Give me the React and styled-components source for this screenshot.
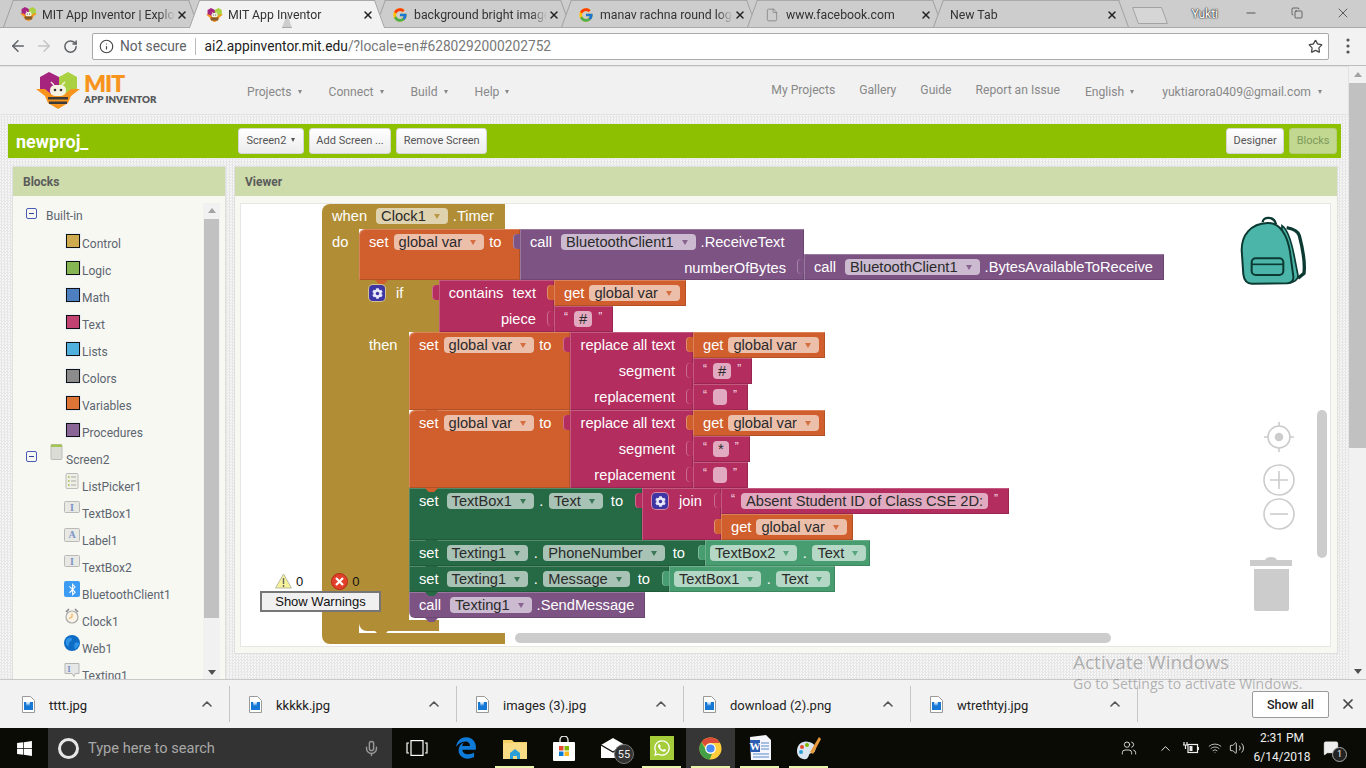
import React from 'react'
import styled, { createGlobalStyle } from 'styled-components'
import { ArrowLeft, ArrowRight, RotateCw, Info, Star, X, ChevronUp, Minus, Copy, File, Mic, Volume2, Wifi, Users, MessageSquare } from 'lucide-react'
import { FaWindows, FaWhatsapp, FaEdgeLegacy, FaCog, FaBluetoothB } from 'react-icons/fa'
import { FcGoogle } from 'react-icons/fc'

const GOLD = '#b18e35'
const ORANGE = '#d05f2d'
const MAGENTA = '#b32d5e'
const PURPLE = '#7d5384'
const DARK = '#266a45'
const LIGHT = '#479c70'

const GlobalStyle = createGlobalStyle`
  html, body {
    margin: 0;
    padding: 0;
    overflow: hidden;
    font-family: Roboto, "Liberation Sans", sans-serif;
  }
`

const Shell = styled.div`
  width: 1366px;
  height: 768px;
  display: flex;
  flex-direction: column;
  overflow: hidden;
  position: relative;
`

/* browser chrome */
const TabStrip = styled.div`
  height: 28px;
  flex: none;
  display: flex;
  background: #cdcdcd;
  padding-left: 8px;
  box-sizing: border-box;
  border-bottom: 1px solid #a9a9a9;
`

const Tab = styled.div`
  position: relative;
  isolation: isolate;
  width: 186px;
  height: ${p => (p.$active ? '28px' : '27px')};
  flex: none;
  display: flex;
  align-items: center;
  padding: 2px 5px 0 12px;
  box-sizing: border-box;
  font-size: 12.3px;
  color: #333;
  z-index: ${p => (p.$active ? 2 : 1)};
  &::before,
  &::after {
    content: '';
    position: absolute;
    top: 0;
    bottom: 0;
    width: 50%;
    z-index: -1;
    background: ${p => (p.$active ? '#f2f2f2' : '#cdcdcd')};
    border-top: 1px solid #a9a9a9;
    box-sizing: border-box;
  }
  &::before {
    left: 0;
    border-left: 1px solid #a0a0a0;
    transform: skewX(-20deg);
  }
  &::after {
    right: 0;
    border-right: 1px solid #a0a0a0;
    transform: skewX(20deg);
  }
`

const Favicon = styled.span`
  width: 16px;
  height: 16px;
  flex: none;
  margin-right: 6px;
  display: flex;
  align-items: center;
  justify-content: center;
  color: #777;
`

const TabTitle = styled.span`
  flex: 1;
  white-space: nowrap;
  overflow: hidden;
  mask-image: linear-gradient(to right, #000 88%, transparent);
`

const TabClose = styled.span`
  width: 14px;
  flex: none;
  display: flex;
  justify-content: center;
  color: #222;
`

const NewTab = styled.div`
  width: 28px;
  height: 15px;
  flex: none;
  margin: 7px 0 0 11px;
  transform: skewX(20deg);
  background: #d6d6d6;
  border: 1px solid #a3a3a3;
  border-radius: 1px;
`

const ProfileName = styled.span`
  margin-left: auto;
  margin-right: 10px;
  align-self: flex-start;
  margin-top: 7px;
  font-size: 12px;
  color: #fff;
  text-shadow: 0 0 2px #333, 0 0 1px #333, 0 0 1px #333;
`

const WindowButton = styled.div`
  width: 46px;
  flex: none;
  height: 26px;
  display: flex;
  align-items: center;
  justify-content: center;
  color: #222;
`

const Toolbar = styled.div`
  height: 38px;
  flex: none;
  display: flex;
  align-items: center;
  background: #f2f2f2;
  box-sizing: border-box;
  border-bottom: 1px solid #bdbdbd;
  padding-bottom: 1px;
`

const NavIcon = styled.span`
  width: ${p => p.$w}px;
  flex: none;
  display: flex;
  justify-content: center;
  color: ${p => p.$color || '#5f6368'};
`

const Omnibox = styled.div`
  width: 1237px;
  height: 27px;
  flex: none;
  margin-left: 4px;
  display: flex;
  align-items: center;
  box-sizing: border-box;
  padding: 0 5px 0 6px;
  background: #fff;
  border: 1px solid #a9a9a9;
  border-radius: 2px;
  font-size: 13.75px;
  color: #5f6368;
`

const NotSecure = styled.span`
  margin-left: 6px;
`

const Divider = styled.span`
  width: 1px;
  height: 17px;
  background: #bbb;
  margin: 0 9px 0 8px;
`

const UrlHost = styled.span`
  color: #222;
`

const UrlRest = styled.span`
  color: #777;
  flex: 1;
`

/* page */
const Page = styled.div`
  height: 613px;
  flex: none;
  display: flex;
  background-color: #f5f5f5;
  background-image: repeating-conic-gradient(#e6e6e6 0 25%, #f6f6f6 0 50%);
  background-size: 3px 3px;
  overflow: hidden;
`

const PageMain = styled.div`
  width: 1349px;
  flex: none;
`

const PageScroll = styled.div`
  width: 17px;
  flex: none;
  position: relative;
  background: #f1f1f1;
  display: flex;
  flex-direction: column;
  align-items: stretch;
`

const ScrollArrow = styled.span`
  width: 0;
  height: 0;
  align-self: center;
  margin: ${p => p.$margin};
  border-left: 4px solid transparent;
  border-right: 4px solid transparent;
  ${p => (p.$up ? 'border-bottom: 5px solid #a3a3a3;' : 'border-top: 5px solid #505050;')}
`

const PageThumb = styled.div`
  height: 365px;
  background: #c1c1c1;
`

const Header = styled.header`
  height: 49px;
  display: flex;
  align-items: center;
  background: #f1f1f1;
  border: 1px solid #e2e2e2;
  border-left: 0;
  box-sizing: border-box;
  padding-top: 2px;
  color: #888;
  font-size: 12.15px;
`

const Brand = styled.div`
  margin: -2px 0 0 36px;
  width: 211px;
  flex: none;
  display: flex;
  align-items: center;
  gap: 4px;
`

const BrandText = styled.div`
  display: flex;
  flex-direction: column;
  margin-top: -2px;
  font-family: Lato, "Liberation Sans", sans-serif;
  font-weight: 800;
`

const BrandBig = styled.span`
  font-size: 23px;
  line-height: 19px;
  height: 19px;
  color: #f7941e;
  letter-spacing: -1px;
`

const BrandSmall = styled.span`
  font-size: 9.8px;
  line-height: 12px;
  color: #58595b;
`

const NavItem = styled.span`
  white-space: nowrap;
  margin-right: ${p => p.$gap || 0}px;
  display: flex;
  align-items: center;
  gap: ${p => p.$caretGap || 6}px;
  margin-top: ${p => (p.$up ? '-3px' : '0')};
`

const MiniCaret = styled.i`
  width: 0;
  height: 0;
  border-left: 2.5px solid transparent;
  border-right: 2.5px solid transparent;
  border-top: 4px solid ${p => p.$color || '#888'};
`

const NavSpacer = styled.span`
  flex: 1;
`

const ProjectBar = styled.div`
  height: 34px;
  margin: 9px 8px 9px 8px;
  display: flex;
  align-items: center;
  padding: 0 4px 0 8px;
  background: #8cc000;
`

const ProjectName = styled.span`
  width: 222px;
  flex: none;
  font-size: 18px;
  font-weight: 700;
  color: #fff;
`

const BarButton = styled.button`
  height: 26px;
  padding: 0 ${p => p.$pad || 6.5}px 2px;
  margin-right: 5px;
  display: flex;
  align-items: center;
  gap: 5px;
  font: 11px Roboto, "Liberation Sans", sans-serif;
  color: ${p => (p.$selected ? '#7d9a5a' : '#555')};
  background: ${p => (p.$selected ? '#c2d790' : 'linear-gradient(#ffffff, #ececec)')};
  border: 1px solid ${p => (p.$selected ? '#b4cb80' : '#d5d5d5')};
  border-radius: 3px;
  white-space: nowrap;
  &:last-child {
    margin-right: 0;
  }
`

const Panels = styled.div`
  display: flex;
  gap: 10px;
  padding-left: 13px;
  align-items: flex-start;
`

const Panel = styled.section`
  width: ${p => p.$w}px;
  flex: none;
  background: #f7f8f2;
  box-shadow: 0 0 0 1px #dfdfdf;
`

const PanelHead = styled.div`
  height: 29px;
  display: flex;
  align-items: center;
  padding-left: 10px;
  background: #cddcaa;
  font-size: 12px;
  font-weight: 700;
  color: #5b5b5b;
`

/* blocks tree */
const TreeBody = styled.div`
  height: 490px;
  display: flex;
  overflow: hidden;
  padding-top: 7px;
  box-sizing: border-box;
`

const TreeList = styled.div`
  width: 190px;
  flex: none;
  height: 500px;
`

const TreeRow = styled.div`
  height: ${p => p.$h || 27}px;
  display: flex;
  align-items: flex-start;
  padding-left: ${p => p.$indent}px;
  font-size: 12px;
  color: #5d6570;
`

const TreeLabel = styled.span`
  margin-top: ${p => p.$top ?? 9}px;
  margin-left: ${p => p.$left ?? 3}px;
  white-space: nowrap;
`

const Expander = styled.span`
  width: 9px;
  height: 9px;
  flex: none;
  margin: ${p => p.$top ?? 5}px ${p => p.$after}px 0 0;
  border: 1px solid #4a5bb8;
  border-radius: 2px;
  display: flex;
  align-items: center;
  justify-content: center;
  &::after {
    content: '';
    width: 5px;
    height: 1px;
    background: #33439f;
  }
`

const Swatch = styled.span`
  width: 12px;
  height: 12px;
  flex: none;
  margin-top: 6px;
  background: ${p => p.$color};
  border: 1px solid #111;
  box-shadow: 0 0 0 1px #e8eef7;
`

const TreeScroll = styled.div`
  width: 15px;
  flex: none;
  background: #f1f1f1;
  display: flex;
  flex-direction: column;
  align-items: stretch;
  padding: 0 1px;
`

const TreeThumb = styled.div`
  height: 399px;
  background: #c1c1c1;
  margin-top: 6px;
`

const TreeGlyph = styled.svg`
  width: ${p => p.$w || 16}px;
  height: 16px;
  flex: none;
  margin-top: ${p => p.$top ?? 2}px;
`

const BluetoothTile = styled.span`
  width: 16px;
  height: 16px;
  flex: none;
  margin-top: 2px;
  display: flex;
  align-items: center;
  justify-content: center;
  background: #3c9bf2;
  color: #fff;
  border-radius: 2px;
`

/* viewer canvas */
const ViewerBody = styled.div`
  padding: 8px 7px 7px 6px;
`

const Canvas = styled.div`
  position: relative;
  height: 442px;
  background: #fff;
  box-shadow: 0 0 0 1px #e6e6e6;
  overflow: hidden;
`

const Block = styled.div`
  position: absolute;
  left: ${p => p.$x - 241}px;
  top: ${p => p.$y - 204}px;
  width: ${p => p.$w}px;
  height: ${p => p.$h}px;
  background: ${p => p.$c};
  box-shadow: ${p => (p.$flat ? 'none' : 'inset 1px 1px rgba(255,255,255,.22), inset -1px -1px rgba(0,0,0,.14)')};
  border-radius: ${p => p.$r || '0'};
  font: 14.67px "Liberation Sans", Arial, sans-serif;
  color: #fff;
  ${p => p.$tab && `
    &::before {
      content: '';
      position: absolute;
      left: -7px;
      top: 5px;
      width: 7px;
      height: 15px;
      background: ${p.$c};
      border-radius: 4px 0 0 4px;
      box-shadow: inset 1px 0 rgba(255,255,255,.3);
    }
  `}
`

const Row = styled.div`
  height: ${p => p.$h || 26}px;
  display: flex;
  align-items: center;
  justify-content: ${p => (p.$right ? 'flex-end' : 'flex-start')};
  padding: ${p => (p.$right ? '0 18px 0 0' : `0 0 0 ${p.$pad || 10}px`)};
  gap: ${p => p.$gap || 5}px;
  white-space: nowrap;
`

const Field = styled.span`
  height: 16px;
  line-height: 16px;
  min-width: 14px;
  padding: 0 ${p => (p.$text ? 5 : 8)}px 0 5px;
  margin-left: ${p => p.$ml || 0}px;
  display: inline-flex;
  align-items: center;
  flex: none;
  border-radius: 4px;
  box-sizing: border-box;
  background: ${p => p.$tint};
  color: #2a2a2a;
`

const FieldCaret = styled.i`
  margin-left: 8px;
  width: 0;
  height: 0;
  border-left: 3px solid transparent;
  border-right: 3px solid transparent;
  border-top: 5px solid ${p => p.$c};
  opacity: 0.85;
`

const Dot = styled.span`
  margin: 0 -2.5px;
`

const Quote = styled.span`
  font-size: 12px;
  line-height: 16px;
  color: #f4dbe5;
  margin-top: -5px;
`

const Notch = styled.span`
  position: absolute;
  left: 16px;
  bottom: -4px;
  width: 13px;
  height: 4px;
  z-index: 2;
  background: ${p => p.$c};
  clip-path: polygon(0 0, 100% 0, 70% 100%, 30% 100%);
`

const Mutator = styled.span`
  width: 16px;
  height: 16px;
  flex: none;
  margin-right: 6px;
  display: flex;
  align-items: center;
  justify-content: center;
  background: #3f36a6;
  border-radius: 4px;
  box-shadow: 0 0 0 1px rgba(255,255,255,.45);
  color: #e8e8f8;
`

const CanvasArt = styled.svg`
  position: absolute;
  left: ${p => p.$x - 241}px;
  top: ${p => p.$y - 204}px;
`

const CanvasScroll = styled.div`
  position: absolute;
  left: ${p => p.$x - 241}px;
  top: ${p => p.$y - 204}px;
  width: ${p => p.$w}px;
  height: ${p => p.$h}px;
  border-radius: 5px;
  background: #ccc;
`

const WarningWidget = styled.div`
  position: absolute;
  left: 19px;
  top: 367px;
  width: 121px;
  z-index: 3;
  display: flex;
  flex-direction: column;
  font: 13px "Liberation Sans", Arial, sans-serif;
  color: #111;
`

const WarningCounts = styled.div`
  height: 20px;
  display: flex;
  align-items: center;
  padding-left: 15px;
  gap: 4px;
`

const ErrorCount = styled.span`
  display: flex;
  align-items: center;
  gap: 4px;
  margin-left: 24px;
`

const WarningButton = styled.div`
  height: 21px;
  box-sizing: border-box;
  border: 2px solid #767676;
  background: #f0f0f0;
  display: flex;
  align-items: center;
  justify-content: center;
`

/* download shelf */
const Downloads = styled.div`
  height: 49px;
  flex: none;
  display: flex;
  align-items: center;
  background: #f2f2f2;
  border-top: 1px solid #c8c8c8;
  box-sizing: border-box;
  padding-left: 3px;
  font-size: 13px;
  color: #222;
`

const DownloadItem = styled.div`
  width: 227px;
  height: 36px;
  flex: none;
  box-sizing: border-box;
  display: flex;
  align-items: center;
  padding-left: 19px;
  border-right: 1px solid #c6c6c6;
`

const DocGlyph = styled.svg`
  flex: none;
`

const DownloadName = styled.span`
  margin-left: 14px;
  flex: 1;
  margin-top: 3px;
`

const DownloadCaret = styled.span`
  width: 44px;
  flex: none;
  display: flex;
  justify-content: center;
  color: #555;
`

const ShowAll = styled.div`
  margin-left: auto;
  width: 77px;
  height: 27px;
  box-sizing: border-box;
  display: flex;
  align-items: center;
  justify-content: center;
  background: #fff;
  border: 1px solid #9a9a9a;
  border-radius: 2px;
  font-size: 12.5px;
  font-weight: 500;
  color: #222;
`

const ShelfClose = styled.span`
  width: 37px;
  flex: none;
  display: flex;
  justify-content: center;
  color: #444;
`

const Watermark = styled.div`
  position: absolute;
  left: 1073px;
  top: 650px;
  pointer-events: none;
  font-family: "Open Sans", "Liberation Sans", sans-serif;
  color: rgba(120, 120, 120, 0.55);
  font-size: 14px;
  z-index: 5;
  white-space: nowrap;
`

const WatermarkBig = styled.div`
  font-size: 19px;
  line-height: 24px;
`

/* taskbar */
const Taskbar = styled.div`
  height: 40px;
  flex: none;
  display: flex;
  align-items: stretch;
  background: #0b0b05;
  color: #fff;
`

const StartButton = styled.div`
  width: 48px;
  flex: none;
  display: flex;
  align-items: center;
  justify-content: center;
`

const SearchBox = styled.div`
  width: 344px;
  flex: none;
  display: flex;
  align-items: center;
  background: #333;
  font-size: 14.6px;
  color: #a8a8a8;
`

const Cortana = styled.span`
  width: 15px;
  height: 15px;
  margin: 0 9px 0 10px;
  flex: none;
  border: 3px solid #e6e6e6;
  border-radius: 50%;
`

const SearchText = styled.span`
  flex: 1;
`

const SearchMic = styled.span`
  width: 42px;
  display: flex;
  justify-content: center;
  color: #999;
`

const TaskSlot = styled.div`
  position: relative;
  width: 49px;
  flex: none;
  display: flex;
  align-items: center;
  justify-content: center;
  background: ${p => (p.$focus ? '#363636' : 'transparent')};
  ${p => p.$open && `
    &::after {
      content: '';
      position: absolute;
      left: 5px;
      right: 5px;
      bottom: 0;
      height: 2px;
      background: #e9f3ac;
    }
  `}
`

const MailBadge = styled.span`
  position: absolute;
  left: 26px;
  top: 16px;
  width: 20px;
  height: 20px;
  border-radius: 50%;
  background: #333;
  border: 1px solid #777;
  box-sizing: border-box;
  display: flex;
  align-items: center;
  justify-content: center;
  font-size: 11px;
  color: #eee;
`

const WhatsappTile = styled.span`
  width: 24px;
  height: 24px;
  display: flex;
  align-items: center;
  justify-content: center;
  background: #a4cd39;
`

const Tray = styled.div`
  margin-left: auto;
  padding-right: 20px;
  display: flex;
  align-items: center;
`

const TrayItem = styled.span`
  position: relative;
  width: ${p => p.$w}px;
  flex: none;
  display: flex;
  justify-content: center;
  color: #eee;
`

const TrayClock = styled.div`
  width: 68px;
  flex: none;
  text-align: center;
  font-size: 12px;
  line-height: 19px;
  color: #eee;
`

const NotifyBadge = styled.span`
  position: absolute;
  left: 16px;
  top: 7px;
  width: 13px;
  height: 13px;
  border-radius: 50%;
  border: 1px solid #aaa;
  background: #222;
  font-size: 9px;
  line-height: 13px;
  text-align: center;
  color: #eee;
`

const BeeSvg = styled.svg`
  flex: none;
`

function BeeLogo({ size = 44 }) {
  return (
    <BeeSvg width={size} height={size * 37 / 44} viewBox="0 0 44 37">
      <polygon points="13,0 23,5 23,19 13,24 4,19 4,5" fill="#a6247e" />
      <polygon points="32,0 41,5 41,19 32,24 23,19 23,5" fill="#a9d141" />
      <polygon points="0,17 9,17 15,22 29,22 35,17 44,17 35,24 32,31 22,37 12,31 9,24" fill="#f7941e" />
      <rect x="14" y="13" width="16" height="11" rx="5" fill="#f7f3e3" />
      <circle cx="19" cy="18" r="1.3" fill="#333" />
      <circle cx="25" cy="18" r="1.3" fill="#333" />
      <path d="M15 10l3 3M29 10l-3 3" stroke="#f7f3e3" strokeWidth="1.4" />
      <rect x="12" y="25" width="20" height="2.5" fill="#3a3a3a" />
      <rect x="13" y="29.5" width="18" height="2.5" fill="#3a3a3a" />
    </BeeSvg>
  )
}

function Backpack() {
  return (
    <CanvasArt $x={1230} $y={205} width="90" height="90" viewBox="0 0 270 270">
      <path d="M98 52C98 34 132 32 138 58" fill="none" stroke="#0c3a32" strokeWidth="7" />
      <path d="M170 68C192 72 204 78 208 92C218 130 226 170 222 205L204 220" fill="#fff" stroke="#0c3a32" strokeWidth="10" />
      <path d="M156 62C176 76 186 120 192 150L204 212C204 222 196 228 186 232L150 234Z" fill="#4bb5a9" stroke="#0c3a32" strokeWidth="5" />
      <path d="M35 135C35 90 62 56 112 54C150 52 172 90 180 140L190 214C192 226 184 234 172 235L66 236C50 236 42 224 40 208Z" fill="#4bb5a9" stroke="#0c3a32" strokeWidth="6" strokeLinejoin="round" />
      <rect x="65" y="160" width="95" height="50" rx="12" fill="#4bb5a9" stroke="#0c3a32" strokeWidth="6" />
      <path d="M66 178H160" stroke="#0c3a32" strokeWidth="5" />
    </CanvasArt>
  )
}

function ZoomControls() {
  return (
    <CanvasArt $x={1245} $y={420} width="50" height="195" viewBox="0 0 50 195" fill="none" stroke="#ccc" strokeWidth="1.6">
      <circle cx="34" cy="17" r="11" />
      <circle cx="34" cy="17" r="3.5" fill="#ccc" />
      <path d="M34 2v4M34 28v4M19 17h4M45 17h4" />
      <circle cx="34" cy="60" r="15" />
      <path d="M25 60h18M34 51v18" />
      <circle cx="34" cy="94" r="15" />
      <path d="M25 94h18" />
      <path d="M5 146h42v-6H32c-1-4-11-4-12 0H5z" fill="#ccc" stroke="none" />
      <path d="M9 149h35v40c0 1-1 2-2 2H11c-1 0-2-1-2-2z" fill="#ccc" stroke="none" />
    </CanvasArt>
  )
}

function Drop({ tint, c, ml, children }) {
  return (
    <Field $tint={tint} $ml={ml}>
      {children}
      <FieldCaret $c={c} />
    </Field>
  )
}

const goldTint = '#dfd2ae'
const orangeTint = '#ecbfab'
const purpleTint = '#cbbad0'
const darkTint = '#a8c3b5'
const lightTint = '#b5d7c5'
const pink = '#e1aac0'

function GetVar({ x, y }) {
  return (
    <Block $x={x} $y={y} $w={132} $h={26} $c={ORANGE} $tab>
      <Row>
        <span>get</span>
        <Drop tint={orangeTint} c={ORANGE}>global var</Drop>
      </Row>
    </Block>
  )
}

function Str({ x, y, w, text }) {
  return (
    <Block $x={x} $y={y} $w={w} $h={26} $c={MAGENTA} $tab>
      <Row $gap={6}>
        <Quote>“</Quote>
        <Field $tint={pink} $text>{text}</Field>
        <Quote>”</Quote>
      </Row>
    </Block>
  )
}

function SetVar({ x, y, h }) {
  return (
    <Block $x={x} $y={y} $w={161} $h={h} $c={ORANGE} $r="6px 0 0 0">
      <Row>
        <span>set</span>
        <Drop tint={orangeTint} c={ORANGE}>global var</Drop>
        <span>to</span>
      </Row>
      <Notch $c={ORANGE} />
    </Block>
  )
}

function ReplaceGroup({ y, star }) {
  return (
    <>
      <SetVar x={409} y={y} h={78} />
      <Block $x={570} $y={y} $w={123} $h={78} $c={MAGENTA} $tab>
        <Row $right>replace all text</Row>
        <Row $right>segment</Row>
        <Row $right>replacement</Row>
      </Block>
      <GetVar x={693} y={y} />
      <Str x={693} y={y + 26} w={star ? 57 : 59} text={star ? '*' : '#'} />
      <Str x={693} y={y + 52} w={55} text="" />
    </>
  )
}

function SetProperty({ y, w, h = 26, component, property }) {
  return (
    <Block $x={409} $y={y} $w={w} $h={h} $c={DARK}>
      <Row $gap={8}>
        <span>set</span>
        <Drop tint={darkTint} c={DARK}>{component}</Drop>
        <Dot>.</Dot>
        <Drop tint={darkTint} c={DARK}>{property}</Drop>
        <span>to</span>
      </Row>
      <Notch $c={DARK} />
    </Block>
  )
}

function GetProperty({ x, y, w, component }) {
  return (
    <Block $x={x} $y={y} $w={w} $h={26} $c={LIGHT} $tab>
      <Row $gap={8} $pad={5}>
        <Drop tint={lightTint} c={LIGHT}>{component}</Drop>
        <Dot>.</Dot>
        <Drop tint={lightTint} c={LIGHT}>Text</Drop>
      </Row>
    </Block>
  )
}

function BlocksWorkspace() {
  return (
    <>
      <Block $x={322} $y={204} $w={183} $h={25} $c={GOLD} $r="8px 0 0 0" $flat>
        <Row $h={24}>
          <span>when</span>
          <Drop tint={goldTint} c={GOLD} ml={4}>Clock1</Drop>
          <span>.Timer</span>
        </Row>
      </Block>
      <Block $x={322} $y={229} $w={37} $h={404} $c={GOLD} $flat>
        <Row $h={25}>do</Row>
      </Block>
      <Block $x={322} $y={633} $w={183} $h={11} $c={GOLD} $r="0 0 0 8px" $flat />

      <SetVar x={359} y={229} h={51} />
      <Block $x={520} $y={229} $w={284} $h={51} $c={PURPLE} $tab>
        <Row>
          <span>call</span>
          <Field $tint={purpleTint} $ml={4}>
            BluetoothClient1
            <FieldCaret $c={PURPLE} />
          </Field>
          <span>.ReceiveText</span>
        </Row>
        <Row $right>numberOfBytes</Row>
      </Block>
      <Block $x={804} $y={254} $w={360} $h={26} $c={PURPLE} $tab>
        <Row>
          <span>call</span>
          <Field $tint={purpleTint} $ml={4}>
            BluetoothClient1
            <FieldCaret $c={PURPLE} />
          </Field>
          <span>.BytesAvailableToReceive</span>
        </Row>
      </Block>

      <Block $x={359} $y={280} $w={80} $h={52} $c={GOLD} $flat>
        <Row>
          <Mutator><FaCog size={11} /></Mutator>
          <span>if</span>
        </Row>
      </Block>
      <Block $x={359} $y={332} $w={50} $h={288} $c={GOLD} $flat>
        <Row $h={25}>then</Row>
      </Block>
      <Block $x={359} $y={620} $w={80} $h={11} $c={GOLD} $r="0 0 0 8px" $flat>
        <Notch $c={GOLD} />
      </Block>

      <Block $x={439} $y={280} $w={115} $h={52} $c={MAGENTA} $tab>
        <Row $right $gap={9}>
          <span>contains</span>
          <span>text</span>
        </Row>
        <Row $right>piece</Row>
      </Block>
      <GetVar x={554} y={280} />
      <Str x={554} y={306} w={59} text="#" />

      <ReplaceGroup y={332} />
      <ReplaceGroup y={410} star />

      <SetProperty y={488} w={233} h={52} component="TextBox1" property="Text" />
      <Block $x={642} $y={488} $w={79} $h={52} $c={MAGENTA} $tab>
        <Row>
          <Mutator><FaCog size={11} /></Mutator>
          <span>join</span>
        </Row>
      </Block>
      <Str x={721} y={488} w={288} text="Absent Student ID of Class CSE 2D:" />
      <GetVar x={721} y={514} />

      <SetProperty y={540} w={296} component="Texting1" property="PhoneNumber" />
      <GetProperty x={705} y={540} w={165} component="TextBox2" />
      <SetProperty y={566} w={260} component="Texting1" property="Message" />
      <GetProperty x={669} y={566} w={166} component="TextBox1" />
      <Block $x={409} $y={592} $w={236} $h={26} $c={PURPLE} $r="0 0 0 6px">
        <Row>
          <span>call</span>
          <Field $tint={purpleTint} $ml={4}>
            Texting1
            <FieldCaret $c={PURPLE} />
          </Field>
          <span>.SendMessage</span>
        </Row>
        <Notch $c={PURPLE} />
      </Block>
    </>
  )
}

const treeColors = [
  ['Control', '#cdab4e'],
  ['Logic', '#86b553'],
  ['Math', '#4d7fc1'],
  ['Text', '#c24371'],
  ['Lists', '#4fb0dd'],
  ['Colors', '#8c8c8c'],
  ['Variables', '#dd7536'],
  ['Procedures', '#8a6597'],
]

function PhoneGlyph() {
  return (
    <TreeGlyph viewBox="0 0 13 16" $w={13} $top={0}>
      <rect x="1" y="0.5" width="11" height="15" rx="1" fill="#dcdcd6" stroke="#bbb" />
      <rect x="1" y="0.5" width="11" height="2.5" fill="#a5c552" />
    </TreeGlyph>
  )
}

function TextGlyph({ letter }) {
  return (
    <TreeGlyph viewBox="0 0 16 16">
      <rect x="0.5" y="1.5" width="15" height={letter === 'A' ? 13 : 11} rx="1" fill="#e9e9e4" stroke="#b9b9b9" />
      <text x="8" y="11" textAnchor="middle" fontSize="10" fontWeight="700" fontFamily="Liberation Serif, serif" fill="#7d93c9">{letter}</text>
    </TreeGlyph>
  )
}

function ListGlyph() {
  return (
    <TreeGlyph viewBox="0 0 16 16">
      <rect x="2" y="0.5" width="12" height="15" rx="1" fill="#efefe6" stroke="#bbb" />
      <path d="M4 4h1.5M4 8h1.5M4 12h1.5" stroke="#9cbc3e" strokeWidth="1.6" />
      <path d="M7 4h5M7 8h5M7 12h5" stroke="#aaa" strokeWidth="1" />
    </TreeGlyph>
  )
}

function ClockGlyph() {
  return (
    <TreeGlyph viewBox="0 0 16 16">
      <path d="M2 4l3-3M14 4l-3-3" stroke="#888" strokeWidth="1.6" />
      <circle cx="8" cy="9" r="6" fill="#fbf4e6" stroke="#a9a9a9" strokeWidth="1.2" />
      <path d="M8 5.5V9l-3 1.5" stroke="#f2a94e" strokeWidth="1.2" fill="none" />
    </TreeGlyph>
  )
}

function GlobeGlyph() {
  return (
    <TreeGlyph viewBox="0 0 16 16">
      <circle cx="8" cy="8" r="8" fill="#0f6cc4" />
      <path d="M2 5c3-3 5-3 6-1 0 3-4 2-3 6 0 2-2 1-3-1zM11 8c2-1 3 0 4 0 0 3-2 5-4 6-1-2-1-4 0-6z" fill="#2f94e5" />
    </TreeGlyph>
  )
}

function BubbleGlyph() {
  return (
    <TreeGlyph viewBox="0 0 16 16">
      <path d="M1 1.5h14v10h-4l-1 3-2-3H1z" fill="#e6e8e8" stroke="#b5b5b5" />
      <text x="5" y="10" textAnchor="middle" fontSize="9" fontWeight="700" fontFamily="Liberation Serif, serif" fill="#7d93c9">I</text>
    </TreeGlyph>
  )
}

const treeComponents = [
  ['ListPicker1', <ListGlyph />],
  ['TextBox1', <TextGlyph letter="I" />],
  ['Label1', <TextGlyph letter="A" />],
  ['TextBox2', <TextGlyph letter="I" />],
  ['BluetoothClient1', <BluetoothTile><FaBluetoothB size={13} /></BluetoothTile>],
  ['Clock1', <ClockGlyph />],
  ['Web1', <GlobeGlyph />],
  ['Texting1', <BubbleGlyph />],
]

function BlocksTree() {
  return (
    <TreeBody>
      <TreeList>
        <TreeRow $indent={13} $h={25}>
          <Expander $after={9} />
          <TreeLabel $top={6} $left={0}>Built-in</TreeLabel>
        </TreeRow>
        {treeColors.map(([name, color]) => (
          <TreeRow key={name} $indent={53}>
            <Swatch $color={color} />
            <TreeLabel $left={2}>{name}</TreeLabel>
          </TreeRow>
        ))}
        <TreeRow $indent={13}>
          <Expander $after={13} $top={7} />
          <PhoneGlyph />
          <TreeLabel $left={3}>Screen2</TreeLabel>
        </TreeRow>
        {treeComponents.map(([name, glyph]) => (
          <TreeRow key={name} $indent={51}>
            {glyph}
            <TreeLabel $left={2}>{name}</TreeLabel>
          </TreeRow>
        ))}
      </TreeList>
      <TreeScroll>
        <ScrollArrow $up $margin="5px 0 0" />
        <TreeThumb />
        <ScrollArrow $margin="52px 0 0" />
      </TreeScroll>
    </TreeBody>
  )
}

function DocIcon() {
  return (
    <DocGlyph width="13" height="17" viewBox="0 0 13 17">
      <path d="M.5.5h8l4 4v12H.5z" fill="#fff" stroke="#9a9a9a" />
      <rect x="2" y="6" width="9" height="8" fill="#1678d4" />
      <path d="M4 6l1 4 1-3 1 3 1-4z" fill="#dcecff" />
    </DocGlyph>
  )
}

function ChromeIcon({ size = 23 }) {
  return (
    <svg width={size} height={size} viewBox="0 0 24 24">
      <circle cx="12" cy="12" r="11.5" fill="#ffce3a" />
      <path d="M12 .5a11.5 11.5 0 0 1 10 5.8H12a5.7 5.7 0 0 0-5.4 3.9L2.6 5.3A11.5 11.5 0 0 1 12 .5z" fill="#dd4b39" />
      <path d="M2.6 5.3l5 8.9a5.7 5.7 0 0 0 6.1 3.1l-2.6 6.2A11.5 11.5 0 0 1 2.6 5.3z" fill="#43a047" />
      <circle cx="12" cy="12" r="5.6" fill="#fff" />
      <circle cx="12" cy="12" r="4.3" fill="#4a8af4" />
    </svg>
  )
}

function ExplorerIcon() {
  return (
    <svg width="24" height="22" viewBox="0 0 24 22">
      <path d="M0 3h9l2 2h13v17H0z" fill="#f3cf63" />
      <rect y="6" width="24" height="16" fill="#f7dc85" />
      <path d="M7 16l5-4 5 4v6h-3v-3h-4v3H7z" fill="#2a9fd8" />
    </svg>
  )
}

function StoreIcon() {
  return (
    <svg width="24" height="25" viewBox="0 0 24 25">
      <path d="M8 7V4a4 4 0 0 1 8 0v3" fill="none" stroke="#eee" strokeWidth="1.3" />
      <rect x="1" y="6" width="22" height="19" rx="1" fill="#fff" />
      <rect x="7" y="10" width="4.5" height="4.5" fill="#e2492f" />
      <rect x="12.5" y="10" width="4.5" height="4.5" fill="#7fba00" />
      <rect x="7" y="15.5" width="4.5" height="4.5" fill="#0a7ed6" />
      <rect x="12.5" y="15.5" width="4.5" height="4.5" fill="#f8b81c" />
    </svg>
  )
}

function MailIcon() {
  return (
    <svg width="24" height="20" viewBox="0 0 24 20">
      <path d="M0 7L12 0l12 7v13H0z" fill="#fff" />
      <path d="M0 7l12 7 12-7" fill="none" stroke="#111" strokeWidth="1.4" />
    </svg>
  )
}

function WordIcon() {
  return (
    <svg width="23" height="26" viewBox="0 0 23 26">
      <path d="M2 2l16-2 5 5v20H3z" fill="#f4f6fb" />
      <path d="M2 5h10v12H2z" fill="#2a5cb0" />
      <text x="7" y="15" textAnchor="middle" fontSize="11" fontWeight="700" fontFamily="Liberation Serif, serif" fill="#fff">W</text>
      <path d="M13 8h8M13 11h8M13 14h8M5 19h16M5 22h16" stroke="#5b87c9" strokeWidth="1.2" />
    </svg>
  )
}

function PaintIcon() {
  return (
    <svg width="25" height="25" viewBox="0 0 25 25">
      <path d="M1 15C1 8 7 4 13 6c5 1 8 5 6 9-1 3-5 1-6 4s-2 5-6 4c-4-1-6-4-6-8z" fill="#dbe6f2" />
      <circle cx="6" cy="11" r="2" fill="#e2492f" />
      <circle cx="11" cy="9" r="2" fill="#7fba00" />
      <circle cx="5" cy="16" r="2" fill="#2a9fd8" />
      <path d="M23 1l-9 15 3 2 8-15z" fill="#e99a3a" />
    </svg>
  )
}

function PowerIcon() {
  return (
    <svg width="16" height="14" viewBox="0 0 16 14" fill="none" stroke="#eee" strokeWidth="1.2">
      <rect x="5" y="3.5" width="9.5" height="8" />
      <rect x="6.5" y="5" width="3" height="5" fill="#eee" stroke="none" />
      <path d="M15.5 6v3" />
      <path d="M1 1v3M4 1v3M0 4h5M2.5 4v4" />
    </svg>
  )
}

const tabs = [
  { title: 'MIT App Inventor | Explore', icon: <BeeLogo size={17} /> },
  { title: 'MIT App Inventor', icon: <BeeLogo size={17} />, active: true },
  { title: 'background bright images', icon: <FcGoogle size={16} /> },
  { title: 'manav rachna round logo', icon: <FcGoogle size={16} /> },
  { title: 'www.facebook.com', icon: <File size={14} strokeWidth={1.2} /> },
  { title: 'New Tab' },
]

const files = ['tttt.jpg', 'kkkkk.jpg', 'images (3).jpg', 'download (2).png', 'wtrethtyj.jpg']

const leftNav = [['Projects', 27], ['Connect', 27], ['Build', 27], ['Help', 0]]

const rightNav = [['My Projects', 24], ['Gallery', 24], ['Guide', 24], ['Report an Issue', 25]]

export default function App() {
  return (
    <Shell>
      <GlobalStyle />
      <TabStrip>
        {tabs.map(tab => (
          <Tab key={tab.title} $active={tab.active}>
            {tab.icon && <Favicon>{tab.icon}</Favicon>}
            <TabTitle>{tab.title}</TabTitle>
            <TabClose><X size={12} strokeWidth={3} /></TabClose>
          </Tab>
        ))}
        <NewTab />
        <ProfileName>Yukti</ProfileName>
        <WindowButton><Minus size={14} strokeWidth={1.2} /></WindowButton>
        <WindowButton><Copy size={12} strokeWidth={1.2} /></WindowButton>
        <WindowButton><X size={16} strokeWidth={1} /></WindowButton>
      </TabStrip>

      <Toolbar>
        <NavIcon $w={35}><ArrowLeft size={18} /></NavIcon>
        <NavIcon $w={18} $color="#c4c4c4"><ArrowRight size={18} /></NavIcon>
        <NavIcon $w={35}><RotateCw size={15} strokeWidth={2.4} /></NavIcon>
        <Omnibox>
          <Info size={15} strokeWidth={1.8} color="#444" />
          <NotSecure>Not secure</NotSecure>
          <Divider />
          <UrlHost>ai2.appinventor.mit.edu</UrlHost>
          <UrlRest>/?locale=en#6280292000202752</UrlRest>
          <Star size={15} color="#444" strokeWidth={2} />
        </Omnibox>
        <NavIcon $w={37} $color="#555">
          <svg width="4" height="16" viewBox="0 0 4 16" fill="currentColor">
            <circle cx="2" cy="2" r="1.6" />
            <circle cx="2" cy="8" r="1.6" />
            <circle cx="2" cy="14" r="1.6" />
          </svg>
        </NavIcon>
      </Toolbar>

      <Page>
        <PageMain>
          <Header>
            <Brand>
              <BeeLogo />
              <BrandText>
                <BrandBig>MIT</BrandBig>
                <BrandSmall>APP INVENTOR</BrandSmall>
              </BrandText>
            </Brand>
            {leftNav.map(([name, gap]) => (
              <NavItem key={name} $gap={gap}>{name}<MiniCaret /></NavItem>
            ))}
            <NavSpacer />
            {rightNav.map(([name, gap]) => (
              <NavItem key={name} $gap={gap} $up>{name}</NavItem>
            ))}
            <NavItem $gap={28}>English<MiniCaret /></NavItem>
            <NavItem $gap={26} $caretGap={7}>yuktiarora0409@gmail.com<MiniCaret /></NavItem>
          </Header>

          <ProjectBar>
            <ProjectName>newproj_</ProjectName>
            <BarButton $pad={7.5}>Screen2<MiniCaret $color="#555" /></BarButton>
            <BarButton>Add Screen ...</BarButton>
            <BarButton>Remove Screen</BarButton>
            <NavSpacer />
            <BarButton>Designer</BarButton>
            <BarButton $selected>Blocks</BarButton>
          </ProjectBar>

          <Panels>
            <Panel $w={212}>
              <PanelHead>Blocks</PanelHead>
              <BlocksTree />
            </Panel>
            <Panel $w={1102}>
              <PanelHead>Viewer</PanelHead>
              <ViewerBody>
                <Canvas>
                  <BlocksWorkspace />
                  <Backpack />
                  <ZoomControls />
                  <CanvasScroll $x={515} $y={633} $w={596} $h={10} />
                  <CanvasScroll $x={1317} $y={410} $w={10} $h={148} />
                  <WarningWidget>
                    <WarningCounts>
                      <svg width="17" height="16" viewBox="0 0 17 16">
                        <path d="M8.5 1L16.5 15H.5z" fill="#f6f29a" stroke="#b9b9a0" />
                        <path d="M8.5 5v6M8.5 12v2" stroke="#666" strokeWidth="1.4" />
                      </svg>
                      0
                      <ErrorCount>
                        <svg width="17" height="17" viewBox="0 0 17 17">
                          <circle cx="8.5" cy="8.5" r="8" fill="#e2402b" stroke="#b62a1a" />
                          <path d="M5 5l7 7M12 5l-7 7" stroke="#fff" strokeWidth="2.2" />
                        </svg>
                        0
                      </ErrorCount>
                    </WarningCounts>
                    <WarningButton>Show Warnings</WarningButton>
                  </WarningWidget>
                </Canvas>
              </ViewerBody>
            </Panel>
          </Panels>
        </PageMain>
        <PageScroll>
          <ScrollArrow $up $margin="6px 0 6px" />
          <PageThumb />
          <ScrollArrow $margin="221px 0 0" />
        </PageScroll>
      </Page>

      <Downloads>
        {files.map(name => (
          <DownloadItem key={name}>
            <DocIcon />
            <DownloadName>{name}</DownloadName>
            <DownloadCaret><ChevronUp size={16} strokeWidth={2.4} /></DownloadCaret>
          </DownloadItem>
        ))}
        <ShowAll>Show all</ShowAll>
        <ShelfClose><X size={16} strokeWidth={2.6} /></ShelfClose>
      </Downloads>

      <Watermark>
        <WatermarkBig>Activate Windows</WatermarkBig>
        Go to Settings to activate Windows.
      </Watermark>

      <Taskbar>
        <StartButton><FaWindows size={17} /></StartButton>
        <SearchBox>
          <Cortana />
          <SearchText>Type here to search</SearchText>
          <SearchMic><Mic size={17} /></SearchMic>
        </SearchBox>
        <TaskSlot>
          <svg width="22" height="16" viewBox="0 0 22 16" fill="none" stroke="#fff" strokeWidth="1.2">
            <rect x="5" y=".6" width="12" height="14.8" />
            <path d="M3 3H1v10h2M19 3h2v10h-2" />
          </svg>
        </TaskSlot>
        <TaskSlot><FaEdgeLegacy size={22} color="#0f7bd8" /></TaskSlot>
        <TaskSlot $open><ExplorerIcon /></TaskSlot>
        <TaskSlot><StoreIcon /></TaskSlot>
        <TaskSlot><MailIcon /><MailBadge>55</MailBadge></TaskSlot>
        <TaskSlot $open><WhatsappTile><FaWhatsapp size={18} color="#fff" /></WhatsappTile></TaskSlot>
        <TaskSlot $open $focus><ChromeIcon /></TaskSlot>
        <TaskSlot $open><WordIcon /></TaskSlot>
        <TaskSlot $open><PaintIcon /></TaskSlot>
        <Tray>
          <TrayItem $w={47}><Users size={16} strokeWidth={1.3} /></TrayItem>
          <TrayItem $w={26}><ChevronUp size={15} strokeWidth={1.5} /></TrayItem>
          <TrayItem $w={26}><PowerIcon /></TrayItem>
          <TrayItem $w={22}><Wifi size={14} strokeWidth={1.3} /></TrayItem>
          <TrayItem $w={22}><Volume2 size={16} strokeWidth={1.3} /></TrayItem>
          <TrayClock>2:31 PM<br />6/14/2018</TrayClock>
          <TrayItem $w={30}>
            <MessageSquare size={16} strokeWidth={1.4} fill="#eee" color="#eee" />
            <NotifyBadge>1</NotifyBadge>
          </TrayItem>
        </Tray>
      </Taskbar>
    </Shell>
  )
}
